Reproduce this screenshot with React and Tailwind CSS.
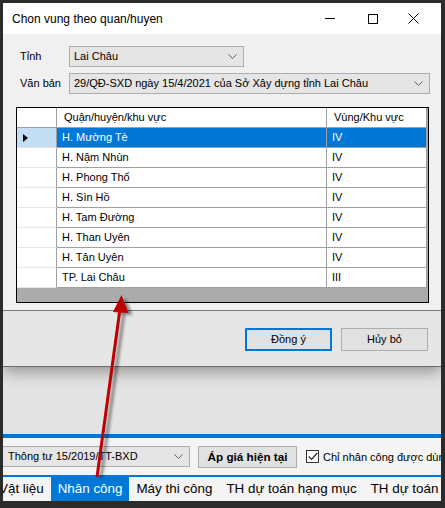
import React from "react";

const Chevron = ({ className = "" }) => (
  <svg width="9" height="5" viewBox="0 0 9 5" className={className}>
    <polyline points="0.5,0.5 4.5,4.5 8.5,0.5" fill="none" stroke="#606060" strokeWidth="1" />
  </svg>
);

const rows = [
  ["H. Mường Tè", "IV"],
  ["H. Nậm Nhùn", "IV"],
  ["H. Phong Thổ", "IV"],
  ["H. Sìn Hồ", "IV"],
  ["H. Tam Đường", "IV"],
  ["H. Than Uyên", "IV"],
  ["H. Tân Uyên", "IV"],
  ["TP. Lai Châu", "III"],
];

function Grid() {
  return (
    <div className="ml-[13px] mt-[13px] w-[413px] h-[196px] border border-black bg-[#ababab] flex flex-col text-[11px] text-black">
      <div className="flex h-[20px] shrink-0 border-b border-[#a0a0a0] bg-white w-[410px]">
        <div className="w-[40px] border-r border-[#a0a0a0] bg-white" />
        <div className="w-[270px] border-r border-[#a0a0a0] pl-[7px] flex items-center">Quận/huyện/khu vực</div>
        <div className="w-[100px] border-r border-[#a0a0a0] pl-[7px] flex items-center">Vùng/Khu vực</div>
      </div>
      {rows.map(([a, b], i) => {
        const sel = i === 0;
        return (
          <div key={a} className="flex h-[20px] shrink-0 w-[410px]">
            <div
              className={
                "w-[40px] border-r border-b flex items-center pl-[6px] " +
                (sel ? "bg-[#c3def5] border-r-[#a0a0a0] border-b-[#e6e6e6]" : "bg-white border-r-[#a0a0a0] border-b-[#e6e6e6]")
              }
            >
              {sel && (
                <svg width="5" height="8" viewBox="0 0 5 8">
                  <polygon points="0,0 5,4 0,8" fill="#000" />
                </svg>
              )}
            </div>
            <div
              className={
                "w-[270px] border-r border-b border-[#a0a0a0] pl-[5px] flex items-center " +
                (sel ? "bg-[#0078d7] text-white" : "bg-white")
              }
            >
              {a}
            </div>
            <div
              className={
                "w-[100px] border-r border-b border-[#a0a0a0] pl-[5px] flex items-center " +
                (sel ? "bg-[#0078d7] text-white" : "bg-white")
              }
            >
              {b}
            </div>
          </div>
        );
      })}
    </div>
  );
}

function Dialog() {
  return (
    <div className="relative z-10 h-[364px] shrink-0 flex flex-col shadow-[0_5px_14px_rgba(0,0,0,0.35)]">
      {/* title bar */}
      <div className="h-[31px] bg-white flex items-center shrink-0">
        <div className="pl-[9px] text-[12px] text-black">Chon vung theo quan/huyen</div>
        <div className="ml-auto flex h-full pr-[8px]">
          <div className="w-[45px] h-full flex items-center justify-center">
            <svg width="10" height="1" viewBox="0 0 10 1">
              <rect x="0" y="0" width="10" height="1" fill="#000" />
            </svg>
          </div>
          <div className="w-[41px] h-full flex items-center justify-center">
            <svg width="10" height="10" viewBox="0 0 10 10">
              <rect x="0.5" y="0.5" width="9" height="9" fill="none" stroke="#000" strokeWidth="1" />
            </svg>
          </div>
          <div className="w-[40px] h-full flex items-center justify-center">
            <svg width="11" height="11" viewBox="0 0 11 11">
              <path d="M0.5 0.5 L10.5 10.5 M10.5 0.5 L0.5 10.5" stroke="#000" strokeWidth="1" />
            </svg>
          </div>
        </div>
      </div>
      {/* upper panel */}
      <div className="h-[276px] bg-[#f0f0f0] shrink-0 pt-[12px] text-[11px] text-black">
        <div className="flex items-center h-[21px]">
          <div className="w-[66px] pl-[17px]">Tỉnh</div>
          <div className="w-[175px] h-[21px] bg-[#e5e5e5] border border-[#adadad] flex items-center pl-[4px] pr-[6px]">
            <span>Lai Châu</span>
            <Chevron className="ml-auto" />
          </div>
        </div>
        <div className="flex items-center h-[21px] mt-[6px]">
          <div className="w-[66px] pl-[17px]">Văn bản</div>
          <div className="w-[361px] h-[21px] bg-[#e5e5e5] border border-[#adadad] flex items-center pl-[4px] pr-[6px]">
            <span className="whitespace-nowrap">29/QĐ-SXD ngày 15/4/2021 của Sở Xây dựng tỉnh Lai Châu</span>
            <Chevron className="ml-auto" />
          </div>
        </div>
        <Grid />
      </div>
      <div className="h-[1px] bg-[#7a7a7a] shrink-0" />
      {/* lower panel */}
      <div className="h-[55px] bg-[#e6e6e6] shrink-0 flex justify-end items-start pt-[17px] pr-[13px] gap-[9px] text-[11px] text-black">
        <div className="w-[87px] h-[23px] bg-[#e1e1e1] border-2 border-[#0078d7] flex items-center justify-center">Đồng ý</div>
        <div className="w-[87px] h-[23px] bg-[#e1e1e1] border border-[#adadad] flex items-center justify-center">Hủy bỏ</div>
      </div>
      <div className="h-[1px] bg-[#6e6e6e] shrink-0" />
    </div>
  );
}

export default function App() {
  return (
    <div className="w-[445px] h-[508px] bg-[#2b2b2b] relative overflow-hidden font-['Liberation_Sans',Arial,sans-serif]">
      <div className="ml-[3px] mr-[4px] mt-[3px] h-[498px] flex flex-col overflow-hidden">
        <Dialog />
        <div className="flex-1 bg-[#e3e3e3]" />
        <div className="h-[4px] bg-[#0078d7] shrink-0" />
        <div className="h-[37px] shrink-0 bg-[#f4f4f4] flex items-start pt-[8px] text-[11px] text-black whitespace-nowrap">
          <div className="ml-[-1px] w-[188px] h-[21px] bg-[#e5e5e5] border border-[#adadad] flex items-center pl-[5px] pr-[6px] shrink-0">
            <span>Thông tư 15/2019/TT-BXD</span>
            <Chevron className="ml-auto" />
          </div>
          <div className="ml-[8px] w-[99px] h-[22px] bg-[#e1e1e1] border border-[#adadad] flex items-center justify-center font-bold text-[11.7px] shrink-0">
            Áp giá hiện tại
          </div>
          <div className="ml-[9px] mt-[4px] w-[13px] h-[13px] border border-[#333] bg-white flex items-center justify-center shrink-0">
            <svg width="10" height="9" viewBox="0 0 10 9">
              <polyline points="0.8,4.5 3.6,7.3 9.2,1" fill="none" stroke="#222" strokeWidth="1.2" />
            </svg>
          </div>
          <div className="ml-[4px] mt-[3px] shrink-0">Chỉ nhân công được dùng</div>
        </div>
        <div className="h-[2px] bg-[#0078d7] shrink-0" />
        <div className="h-[24px] shrink-0 bg-[#f4f4f4] flex items-stretch text-[13.4px] text-black whitespace-nowrap ml-[-11px]">
          <div className="px-[7px] flex items-center shrink-0">Vật liệu</div>
          <div className="px-[7px] flex items-center shrink-0 bg-[#0078d7] text-white">Nhân công</div>
          <div className="px-[7px] flex items-center shrink-0">Máy thi công</div>
          <div className="px-[7px] flex items-center shrink-0">TH dự toán hạng mục</div>
          <div className="px-[7px] flex items-center shrink-0">TH dự toán</div>
        </div>
      </div>
      <svg className="absolute left-0 top-0 pointer-events-none z-20" width="445" height="508" viewBox="0 0 445 508">
        <defs>
          <filter id="blur" x="-50%" y="-50%" width="200%" height="200%">
            <feGaussianBlur stdDeviation="1.8" />
          </filter>
        </defs>
        <g filter="url(#blur)" opacity="0.45">
          <line x1="101" y1="478" x2="124" y2="312" stroke="#000" strokeWidth="3" />
          <polygon points="125.5,298 117,314 132.5,315" fill="#000" />
        </g>
        <line x1="97" y1="477" x2="120" y2="309" stroke="#c00000" strokeWidth="3" />
        <polygon points="121.5,295 113,312 128.5,313" fill="#c00000" />
      </svg>
    </div>
  );
}
